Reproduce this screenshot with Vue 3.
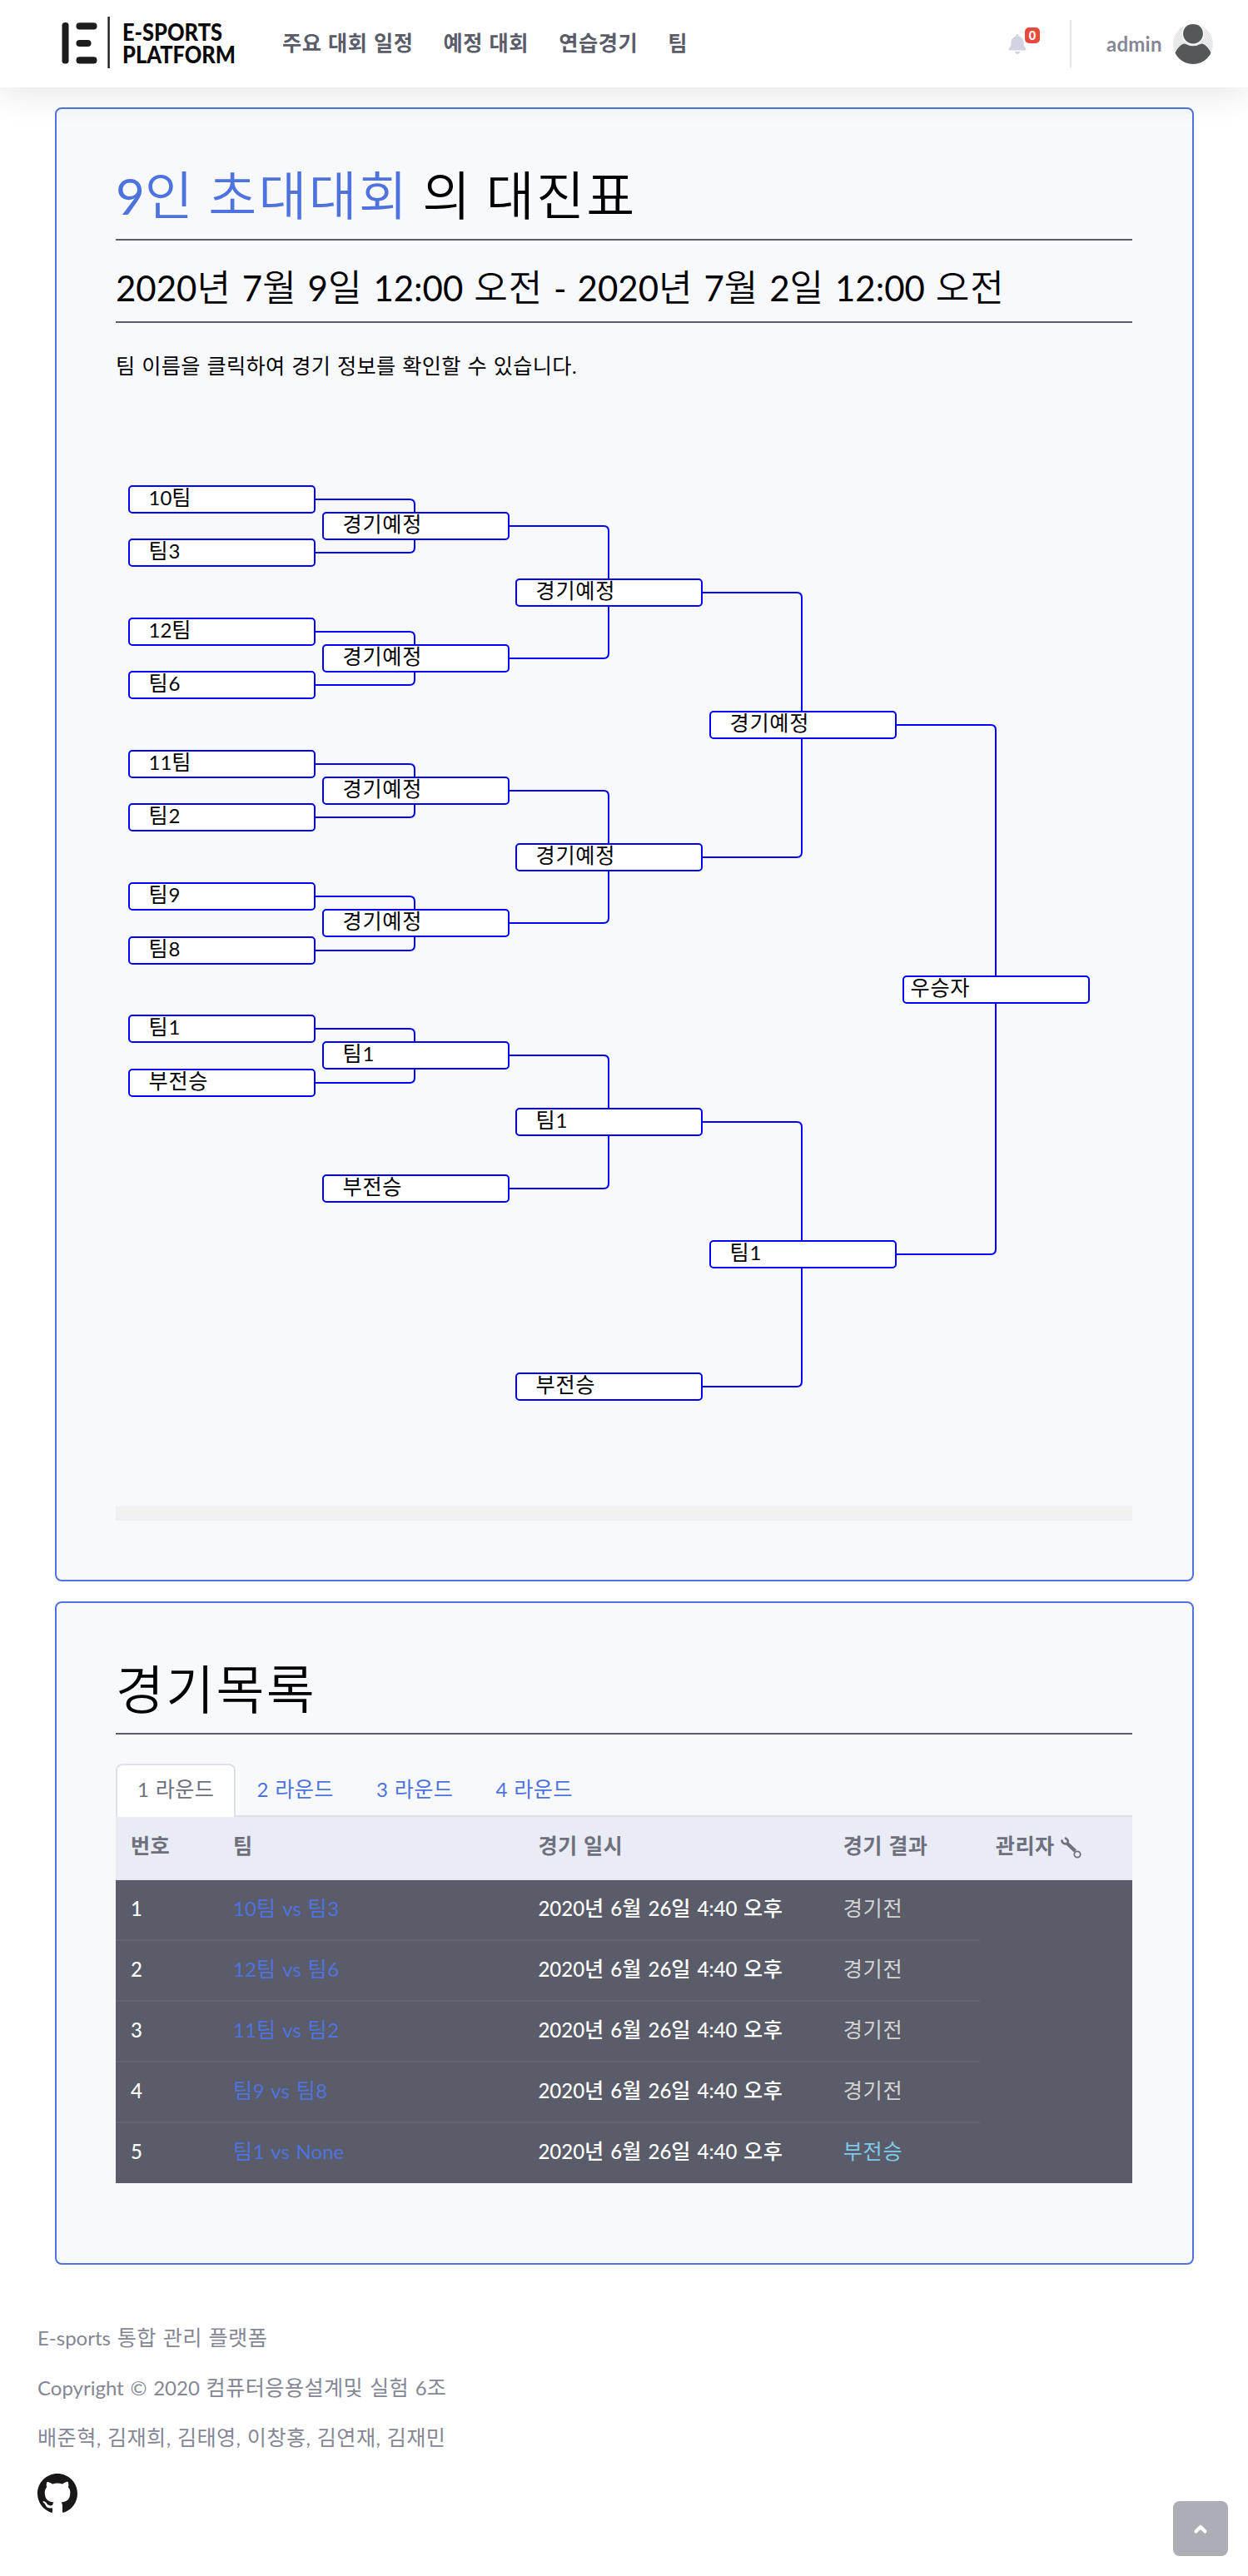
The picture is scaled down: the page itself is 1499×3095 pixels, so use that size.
<script setup>
import { h } from 'vue'

// Splits mixed text so Hangul runs can carry their own size and tracking.
const Txt = (props) =>
  h(
    'span',
    { class: 'txt' },
    props.t
      .split(/([\uac00-\ud7a3]+)/)
      .filter(Boolean)
      .map((s) => (/[\uac00-\ud7a3]/.test(s) ? h('span', { class: 'ko' }, s) : s))
  )
Txt.props = ['t']

const menu = ['주요 대회 일정', '예정 대회', '연습경기', '팀']

const colX = [15, 248, 480, 713, 945]
const joinX = [359, 592, 824, 1057]
const slot = 159.1
const base = 174

const node = (round, y, name, winner = false) => ({ x: colX[round], y: Math.round(y - 17), cy: Math.round(y), round, name, winner })
const pairs = [
  ['10팀', '팀3'],
  ['12팀', '팀6'],
  ['11팀', '팀2'],
  ['팀9', '팀8'],
  ['팀1', '부전승']
]
const nodes = []
pairs.forEach(([a, b], i) => {
  const c = base + slot * i
  nodes.push(node(0, c - 32.2, a), node(0, c + 32.2, b))
  nodes.push(node(1, c, i < 4 ? '경기예정' : '팀1'))
})
nodes.push(node(1, base + slot * 5, '부전승'))
nodes.push(node(2, base + slot * 0.5, '경기예정'))
nodes.push(node(2, base + slot * 2.5, '경기예정'))
nodes.push(node(2, base + slot * 4.5, '팀1'))
nodes.push(node(2, base + slot * 6.5, '부전승'))
nodes.push(node(3, base + slot * 1.5, '경기예정'))
nodes.push(node(3, base + slot * 5.5, '팀1'))
nodes.push(node(4, base + slot * 3.5, '우승자', true))

const lines = [0, 1, 2, 3].flatMap((r) => {
  const ys = nodes.filter((n) => n.round === r).map((n) => n.cy).sort((a, b) => a - b)
  const out = []
  for (let i = 0; i < ys.length; i += 2) {
    const x0 = colX[r] + 223
    const x1 = joinX[r]
    out.push(`M${x0} ${ys[i]}H${x1 - 6}Q${x1} ${ys[i]} ${x1} ${ys[i] + 6}V${ys[i + 1] - 6}Q${x1} ${ys[i + 1]} ${x1 - 6} ${ys[i + 1]}H${x0}`)
  }
  return out
})

const tabs = ['1 라운드', '2 라운드', '3 라운드', '4 라운드']
const date = '2020년 6월 26일 4:40 오후'
const rows = [
  { team: '10팀 vs 팀3', result: '경기전' },
  { team: '12팀 vs 팀6', result: '경기전' },
  { team: '11팀 vs 팀2', result: '경기전' },
  { team: '팀9 vs 팀8', result: '경기전' },
  { team: '팀1 vs None', result: '부전승', bye: true }
]
const footer = [
  'E-sports 통합 관리 플랫폼',
  'Copyright © 2020 컴퓨터응용설계및 실험 6조',
  '배준혁, 김재희, 김태영, 이창홍, 김연재, 김재민'
]
</script>

<template>
  <div class="page">
    <header class="topbar">
      <svg class="logo" width="220" height="80" viewBox="0 -6 220 80">
        <g fill="#1c1c1c">
          <rect x="2.500" y="8" width="8" height="49.500" rx="3.500" />
          <rect x="19.500" y="8.300" width="25" height="8.200" rx="4" />
          <rect x="19.500" y="29" width="18" height="8" rx="4" />
          <rect x="19.500" y="49.200" width="25" height="8.200" rx="4" />
          <rect x="57.400" y="1" width="2.400" height="62" />
        </g>
        <g font-family="Lato, sans-serif" font-weight="900" font-size="28.500" fill="#0a0a0a">
          <text x="75" y="29.500" textLength="120" lengthAdjust="spacingAndGlyphs">E-SPORTS</text>
          <text x="75" y="57" textLength="136" lengthAdjust="spacingAndGlyphs">PLATFORM</text>
        </g>
      </svg>
      <nav class="menu">
        <a v-for="m in menu" :key="m"><Txt :t="m" /></a>
      </nav>
      <div class="tools">
        <div class="bell">
          <svg width="22" height="24" viewBox="0 0 448 512"><path fill="#d1d3e2" d="M224 512c35.320 0 63.970-28.650 63.970-64H160.030c0 35.350 28.650 64 63.970 64zm215.390-149.710c-19.320-20.760-55.470-51.990-55.470-154.290 0-77.700-54.480-139.900-127.940-155.160V32c0-17.670-14.320-32-31.980-32s-31.980 14.330-31.980 32v20.840C118.560 68.100 64.080 130.300 64.080 208c0 102.300-36.150 133.530-55.470 154.290-6 6.450-8.660 14.160-8.610 21.710.11 16.400 12.980 32 32.100 32h383.800c19.120 0 32-15.600 32.100-32 .05-7.550-2.610-15.270-8.610-21.710z" /></svg>
          <span class="badge">0</span>
        </div>
        <span class="divider"></span>
        <span class="user">admin</span>
        <svg class="avatar" width="48" height="48" viewBox="0 0 48 48">
          <defs>
            <clipPath id="face"><circle cx="24" cy="24" r="24" /></clipPath>
            <pattern id="check" width="2" height="2" patternUnits="userSpaceOnUse">
              <rect width="2" height="2" fill="#f4f4f4" />
              <rect width="1" height="1" fill="#dedede" />
              <rect x="1" y="1" width="1" height="1" fill="#dedede" />
            </pattern>
          </defs>
          <g clip-path="url(#face)">
            <rect width="48" height="48" fill="url(#check)" />
            <path d="M0 42C3 29 10 23.500 14 23.500Q24 29 34 23.500C38 23.500 45 29 48 42V48H0Z" fill="#545859" />
            <circle cx="24" cy="11.500" r="13.800" fill="#f6f6f6" />
            <circle cx="24" cy="11.500" r="11.900" fill="#545859" />
          </g>
        </svg>
      </div>
    </header>

    <main>
      <section class="card bracket-card">
        <h1><span class="accent"><Txt t="9인 초대대회" /></span> <Txt t="의 대진표" /></h1>
        <hr />
        <h2><Txt t="2020년 7월 9일 12:00 오전 - 2020년 7월 2일 12:00 오전" /></h2>
        <hr />
        <p class="hint"><Txt t="팀 이름을 클릭하여 경기 정보를 확인할 수 있습니다." /></p>
        <div class="bracket">
          <svg width="1221" height="1352" viewBox="0 0 1221 1352">
            <path v-for="(d, i) in lines" :key="i" :d="d" fill="none" stroke="#00f" stroke-width="2" />
          </svg>
          <div
            v-for="(n, i) in nodes"
            :key="i"
            class="node"
            :class="{ winner: n.winner }"
            :style="{ left: n.x + 'px', top: n.y + 'px' }"
          ><Txt :t="n.name" /></div>
        </div>
        <div class="scrollbar"></div>
      </section>

      <section class="card list-card">
        <h1><Txt t="경기목록" /></h1>
        <hr />
        <div class="tabs">
          <a v-for="(t, i) in tabs" :key="t" :class="{ active: i === 0 }"><Txt :t="t" /></a>
        </div>
        <table>
          <colgroup><col class="c10" /><col class="c30" /><col class="c30" /><col class="c15" /><col class="c15" /></colgroup>
          <thead>
            <tr>
              <th><Txt t="번호" /></th>
              <th><Txt t="팀" /></th>
              <th><Txt t="경기 일시" /></th>
              <th><Txt t="경기 결과" /></th>
              <th>
                <div class="admin">
                  <Txt t="관리자" />
                  <svg width="25" height="26" viewBox="0 0 25 26" fill="none" stroke="#6e707e">
                    <path d="M7.500 7.500L17.500 17" stroke-width="4.400" />
                    <path d="M1.300 3.500C1.500 8 5.500 9.500 8 7.500C9.500 5.500 8.700 2.500 5 1.200" stroke-width="2.600" />
                    <circle cx="20" cy="21" r="3.700" stroke-width="1.800" />
                  </svg>
                </div>
              </th>
            </tr>
          </thead>
          <tbody>
            <tr v-for="(r, i) in rows" :key="i">
              <td class="strong">{{ i + 1 }}</td>
              <td class="team"><Txt :t="r.team" /></td>
              <td class="strong"><Txt :t="date" /></td>
              <td :class="r.bye ? 'bye' : 'pending'"><Txt :t="r.result" /></td>
              <td v-if="i === 0" rowspan="5"></td>
            </tr>
          </tbody>
        </table>
      </section>
    </main>

    <footer>
      <p v-for="f in footer" :key="f"><Txt :t="f" /></p>
      <svg width="48" height="48" viewBox="0 0 16 16"><path fill="#191717" d="M8 0C3.580 0 0 3.580 0 8c0 3.540 2.290 6.530 5.470 7.590.4.070.55-.170.55-.380 0-.190-.010-.820-.010-1.490-2.010.370-2.530-.490-2.690-.940-.090-.230-.480-.940-.820-1.130-.280-.150-.680-.520-.010-.530.630-.010 1.080.580 1.230.820.720 1.210 1.870.870 2.330.660.070-.520.280-.870.510-1.070-1.780-.200-3.640-.890-3.640-3.950 0-.870.310-1.590.820-2.150-.080-.200-.360-1.020.080-2.120 0 0 .670-.210 2.200.820.640-.180 1.320-.270 2-.270s1.360.090 2 .270c1.530-1.040 2.200-.820 2.200-.820.440 1.100.160 1.920.080 2.120.510.560.820 1.270.820 2.150 0 3.070-1.870 3.750-3.650 3.950.290.250.540.730.540 1.480 0 1.070-.010 1.930-.010 2.200 0 .210.150.460.550.380A8.010 8.010 0 0 0 16 8c0-4.420-3.580-8-8-8z" /></svg>
    </footer>

    <a class="to-top">
      <svg width="20" height="16" viewBox="0 0 20 16"><path d="M4.500 11.500L10 6L15.500 11.500" fill="none" stroke="#fff" stroke-width="4.200" stroke-linecap="round" stroke-linejoin="round" /></svg>
    </a>
  </div>
</template>

<style>
body {
  background: #fff;
}
</style>

<style scoped>
.page,
.page * {
  box-sizing: border-box;
}
.page {
  position: relative;
  width: 1499px;
  height: 3095px;
  overflow: hidden;
  font-family: Lato, 'Noto Sans CJK KR', sans-serif;
  font-size: 24px;
  line-height: 36px;
  word-spacing: 1.6px;
  color: #858796;
}
:deep(.ko) {
  font-size: 1.05em;
  line-height: 1;
  letter-spacing: 0.016em;
}
:deep(.txt) {
  white-space: pre;
}
h1,
h2,
p {
  margin: 0;
}
hr {
  height: 2px;
  margin: 0;
  border: 0;
  background: #5a5c69;
}

.topbar {
  position: relative;
  z-index: 2;
  display: flex;
  align-items: center;
  height: 105px;
  padding: 0 42px 0 72px;
  background: #fff;
  box-shadow: 0 4px 42px rgba(58, 59, 69, 0.15);
}
.menu {
  display: flex;
  gap: 36px;
  margin-left: 47px;
  margin-top: -2px;
  font-weight: 700;
  color: #5a5c69;
}
.menu :deep(.ko) {
  letter-spacing: 0.024em;
}
.tools {
  display: flex;
  align-items: center;
  margin-left: auto;
}
.bell {
  position: relative;
  display: flex;
  margin-right: 52px;
}
.badge {
  position: absolute;
  left: 20px;
  top: -8px;
  width: 18px;
  height: 19px;
  border-radius: 5px;
  background: #e74a3b;
  color: #fff;
  font-size: 14.5px;
  font-weight: 900;
  line-height: 19px;
  text-align: center;
}
.divider {
  width: 2px;
  height: 57px;
  background: #e3e6f0;
}
.user {
  width: 80px;
  margin-left: 42px;
  font-weight: 700;
  letter-spacing: 0.01em;
}

main {
  display: flex;
  flex-direction: column;
  gap: 24px;
  padding: 24px 65px 0 66px;
}
.card {
  border: 2px solid #4e73df;
  border-radius: 8px;
  background: #f8f9fd;
  color: #000;
}
.bracket-card {
  height: 1771px;
  padding: 68px 72px 0 71px;
}
.list-card {
  height: 797px;
  padding: 68px 72px 0 71px;
}
h1 {
  margin-bottom: 16px;
  font-size: 60px;
  font-weight: 400;
  line-height: 72px;
  word-spacing: 0.8px;
}
.accent {
  color: #4e73df;
}
h2 {
  padding: 32px 0 15px;
  font-size: 42px;
  font-weight: 400;
  line-height: 50px;
  word-spacing: 2.1px;
}
h1 :deep(.ko),
h2 :deep(.ko) {
  font-family: 'Noto Sans CJK KR', sans-serif;
  font-weight: 350;
  letter-spacing: 0.036em;
}
h2 :deep(.ko) {
  letter-spacing: 0.022em;
}
.hint {
  padding-top: 34px;
}
.hint :deep(.ko) {
  letter-spacing: 0.013em;
}
.bracket {
  position: relative;
  height: 1352px;
}
.bracket svg {
  display: block;
}
.node {
  position: absolute;
  width: 225px;
  height: 34px;
  padding-left: 22.5px;
  border: 2px solid #00f;
  border-radius: 5px;
  background: #fff;
  line-height: 25px;
}
.node :deep(.ko),
.pending :deep(.ko),
.bye :deep(.ko) {
  letter-spacing: 0.03em;
}
.node.winner {
  padding-left: 7.5px;
}
.scrollbar {
  height: 17px;
  background: #f1f1f1;
}

.tabs {
  display: flex;
  height: 64px;
  margin-top: 35px;
  border-bottom: 2px solid #dddfeb;
}
.tabs a {
  width: 143.5px;
  height: 64px;
  padding: 13px 0 0 26px;
  color: #4e73df;
}
.tabs a.active {
  border: 2px solid #dddfeb;
  border-bottom: 0;
  border-radius: 8px 8px 0 0;
  padding: 11px 0 0 24px;
  background: #fff;
  color: #6e707e;
}
table {
  width: 100%;
  table-layout: fixed;
  border-collapse: separate;
  border-spacing: 0;
}
.c10 {
  width: 10%;
}
.c30 {
  width: 30%;
}
.c15 {
  width: 15%;
}
th {
  height: 76px;
  padding: 0 18px 4px;
  border-bottom: 2px solid #e3e6f0;
  background: #e9ecf4;
  color: #6e707e;
  font-weight: 700;
  text-align: left;
}
.admin {
  display: flex;
  align-items: center;
  gap: 7px;
}
.admin svg {
  margin-top: 4px;
}
td {
  height: 73px;
  padding: 0 18px 3px;
  border-bottom: 2px solid #636572;
  background: #5a5c69;
}
tbody tr:last-child td,
td[rowspan] {
  border-bottom: 0;
}
tbody tr:last-child td {
  height: 72px;
  padding-bottom: 4px;
}
.strong {
  color: #fff;
  font-weight: 500;
}
.team {
  color: #4e73df;
}
th:nth-child(n + 2),
td:nth-child(n + 2) {
  padding-left: 19px;
}
.pending {
  color: #d3d3d3;
}
.bye {
  color: #7ec8e9;
}

footer {
  display: flex;
  flex-direction: column;
  gap: 24px;
  padding: 70px 45px 0;
}
footer svg {
  margin-top: 1px;
}
.to-top {
  position: absolute;
  right: 24px;
  bottom: 24px;
  display: flex;
  align-items: center;
  justify-content: center;
  width: 66px;
  height: 66px;
  border-radius: 8px;
  background: #acadb5;
}
</style>
